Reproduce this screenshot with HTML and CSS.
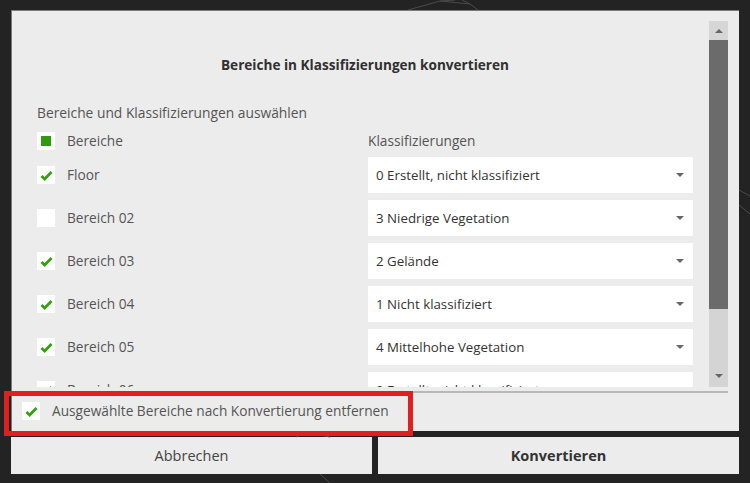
FILE: index.html
```html
<!DOCTYPE html>
<html lang="de">
<head>
<meta charset="utf-8">
<title>Bereiche in Klassifizierungen konvertieren</title>
<link rel="stylesheet" href="styles.css">
</head>
<body>
<div class="screen">
  <svg class="wire" width="750" height="483" viewBox="0 0 750 483" aria-hidden="true">
    <path d="M408 10 L440 1 L470 4 L478 10 M440 1 L455 0 M462 0 L470 4" />
    <path d="M739 190 L750 196 M739 205 L750 214" />
    <path d="M296 437 L305 432 L330 437 M320 474 L330 483" />
  </svg>

  <div class="dialog">
    <div class="scroll-wrap">
      <div class="content">
        <h1 class="title">Bereiche in Klassifizierungen konvertieren</h1>
        <p class="subtitle">Bereiche und Klassifizierungen auswählen</p>

        <div class="grid">
          <div class="cell head">
            <span class="box"><span class="partial"></span></span>
            <span class="label">Bereiche</span>
          </div>
          <div class="cell head"><span class="label col2">Klassifizierungen</span></div>

          <div class="cell">
            <span class="box"><svg class="tick" viewBox="0 0 14 12"><path d="M1.5 6.5 L5 9.8 L12.5 2.2"/></svg></span>
            <span class="label">Floor</span>
          </div>
          <div class="select"><span>0 Erstellt, nicht klassifiziert</span><i class="caret"></i></div>

          <div class="cell">
            <span class="box"></span>
            <span class="label">Bereich 02</span>
          </div>
          <div class="select"><span>3 Niedrige Vegetation</span><i class="caret"></i></div>

          <div class="cell">
            <span class="box"><svg class="tick" viewBox="0 0 14 12"><path d="M1.5 6.5 L5 9.8 L12.5 2.2"/></svg></span>
            <span class="label">Bereich 03</span>
          </div>
          <div class="select"><span>2 Gelände</span><i class="caret"></i></div>

          <div class="cell">
            <span class="box"><svg class="tick" viewBox="0 0 14 12"><path d="M1.5 6.5 L5 9.8 L12.5 2.2"/></svg></span>
            <span class="label">Bereich 04</span>
          </div>
          <div class="select"><span>1 Nicht klassifiziert</span><i class="caret"></i></div>

          <div class="cell">
            <span class="box"><svg class="tick" viewBox="0 0 14 12"><path d="M1.5 6.5 L5 9.8 L12.5 2.2"/></svg></span>
            <span class="label">Bereich 05</span>
          </div>
          <div class="select"><span>4 Mittelhohe Vegetation</span><i class="caret"></i></div>

          <div class="cell">
            <span class="box"><svg class="tick" viewBox="0 0 14 12"><path d="M1.5 6.5 L5 9.8 L12.5 2.2"/></svg></span>
            <span class="label">Bereich 06</span>
          </div>
          <div class="select"><span>0 Erstellt, nicht klassifiziert</span><i class="caret"></i></div>
        </div>
      </div>

      <div class="scrollbar">
        <div class="sb-btn"><i class="sb-up"></i></div>
        <div class="sb-thumb"></div>
        <div class="sb-track"><i class="sb-down"></i></div>
      </div>
    </div>

    <div class="sep"></div>

    <div class="footer-check">
      <span class="box"><svg class="tick" viewBox="0 0 14 12"><path d="M1.5 6.5 L5 9.8 L12.5 2.2"/></svg></span>
      <span class="label">Ausgewählte Bereiche nach Konvertierung entfernen</span>
    </div>
  </div>

  <div class="buttons">
    <button class="btn">Abbrechen</button>
    <button class="btn primary">Konvertieren</button>
  </div>

  <div class="highlight"></div>
</div>
</body>
</html>
```

FILE: styles.css
```css
* { box-sizing: border-box; }

html, body {
  margin: 0;
  padding: 0;
  background: #232323;
}

body {
  font-family: "Open Sans", "Noto Sans", "Liberation Sans", sans-serif;
  width: 750px;
  height: 483px;
  overflow: hidden;
}

.screen {
  position: relative;
  width: 750px;
  height: 483px;
  padding: 10px 11px 9px 11px;
  display: flex;
  flex-direction: column;
  gap: 6px;
}

.wire {
  position: absolute;
  left: 0;
  top: 0;
  pointer-events: none;
}
.wire path {
  fill: none;
  stroke: #4a4a4a;
  stroke-width: 1;
}

.dialog {
  position: relative;
  height: 421px;
  background: #ececec;
  border-top: 1px solid #7a7a7a;
  border-left: 1px solid #7a7a7a;
  display: flex;
  flex-direction: column;
}

.scroll-wrap {
  display: flex;
  height: 376px;
  flex: none;
}

.content {
  flex: 1;
  overflow: hidden;
  padding: 45px 16px 0 25px;
}

.title {
  margin: 0;
  font-size: 13.6px;
  line-height: 18px;
  font-weight: 700;
  color: #303030;
  text-align: center;
}

.subtitle {
  margin: 30px 0 0 0;
  font-size: 13.8px;
  line-height: 18px;
  color: #555;
}

.grid {
  margin-top: 10px;
  display: grid;
  grid-template-columns: 331px 1fr;
  grid-auto-rows: 36px;
  grid-template-rows: 18px;
  row-gap: 7px;
}

.cell {
  display: flex;
  align-items: center;
  gap: 12px;
}

.box {
  width: 18px;
  height: 18px;
  flex: none;
  background: #fff;
  display: flex;
  align-items: center;
  justify-content: center;
}

.partial {
  width: 10px;
  height: 10px;
  background: #2f9a0e;
}

.tick {
  width: 13px;
  height: 11px;
}
.tick path {
  fill: none;
  stroke: #33a00f;
  stroke-width: 3;
  stroke-linecap: butt;
  stroke-linejoin: miter;
}

.label {
  font-size: 13.7px;
  line-height: 18px;
  color: #555;
}

.select {
  background: #fff;
  display: flex;
  align-items: center;
  justify-content: space-between;
  padding: 0 9px 0 8px;
  font-size: 13.3px;
  color: #333;
}

.caret {
  width: 0;
  height: 0;
  border-left: 4px solid transparent;
  border-right: 4px solid transparent;
  border-top: 4px solid #666;
}

.scrollbar {
  width: 19px;
  margin: 10px 11px 0 0;
  display: flex;
  flex-direction: column;
  background: #d4d4d4;
}

.sb-btn {
  height: 19px;
  display: flex;
  align-items: center;
  justify-content: center;
  background: #d6d6d6;
}

.sb-up {
  width: 0;
  height: 0;
  border-left: 4px solid transparent;
  border-right: 4px solid transparent;
  border-bottom: 4px solid #666;
}

.sb-thumb {
  height: 269px;
  background: #6b6b6b;
}

.sb-track {
  flex: 1;
  display: flex;
  align-items: flex-end;
  justify-content: center;
  padding-bottom: 9px;
}

.sb-down {
  width: 0;
  height: 0;
  border-left: 4px solid transparent;
  border-right: 4px solid transparent;
  border-top: 4px solid #666;
}

.sep {
  height: 2px;
  margin: 4px 11px 0 0;
  background: #b8b8b8;
}

.footer-check {
  flex: 1;
  display: flex;
  align-items: center;
  gap: 12px;
  padding: 0 0 2px 10px;
}

.buttons {
  display: flex;
  gap: 6px;
  height: 37px;
}

.btn {
  flex: 1;
  border: none;
  background: #ececec;
  font-family: inherit;
  font-size: 14.5px;
  color: #444;
  padding: 0;
}

.btn.primary {
  font-weight: 700;
  color: #333;
}

.highlight {
  position: absolute;
  left: 4px;
  top: 391px;
  width: 409px;
  height: 45px;
  border: 5px solid #e31e1e;
  pointer-events: none;
}
```
